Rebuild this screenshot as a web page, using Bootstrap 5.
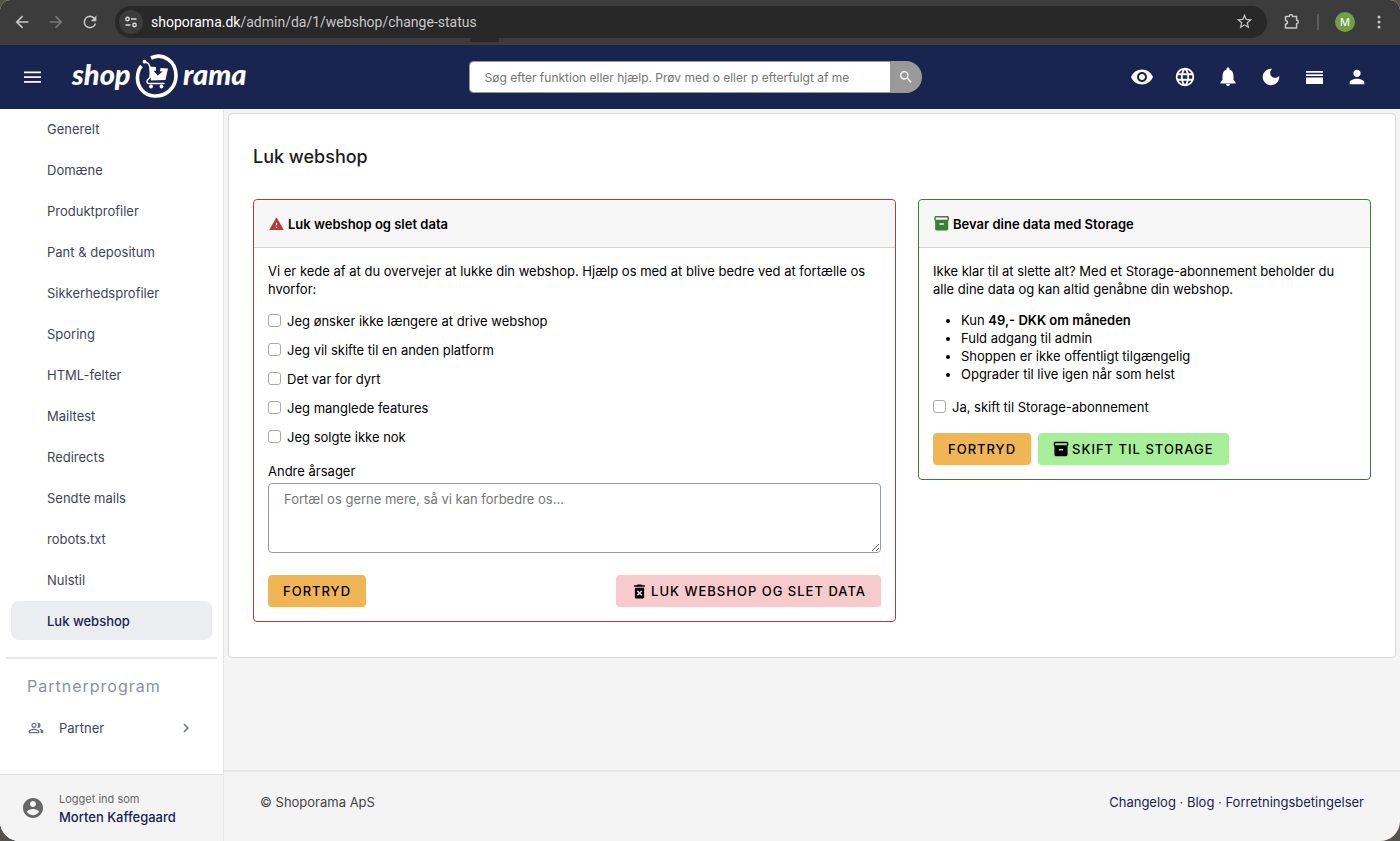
<!DOCTYPE html>
<html lang="da">
<head>
<meta charset="utf-8">
<meta name="viewport" content="width=device-width, initial-scale=1">
<title>Luk webshop</title>
<link rel="stylesheet" href="https://cdn.jsdelivr.net/npm/bootstrap@5.3.0/dist/css/bootstrap.min.css">
<style>
body{font-family:Inter,"Liberation Sans",sans-serif;font-size:13px;line-height:18px;color:#000;background:#55534a}
a{text-decoration:none}
svg{display:block;flex:none;fill:currentColor}
svg.outline{fill:none;stroke:currentColor}
.window{height:100vh;overflow:hidden;border-radius:10px 10px 20px 20px;background:#f4f4f4}
/* Browser bar */
.chrome{height:45px;background:#3c3c3c;color:#c7c7c7;padding:0 13px 2px 14px}
.chrome button,.topbar .icon-btn{background:none;border:0;padding:0;color:inherit}
.chrome .nav-btns{gap:18px;margin-right:17px}
.chrome .faded{color:#777}
.pill{position:relative;height:32px;border-radius:16px;background:#282828;padding:0 14px 0 4px}
.pill::after{content:"";position:absolute;left:355px;top:32px;width:29px;height:4px;background:#282828}
.pill .site-info{width:24px;height:24px;border-radius:12px;background:#3c3c3c;color:#ddd}
.url{font-family:Roboto,sans-serif;font-size:14px;color:#c7c7c7}
.url b{font-weight:400;color:#fff}
.chrome .avatar{width:20px;height:20px;border-radius:10px;background:#73a046;color:#fff;font-size:11px}
.vr-line{width:2px;height:16px;background:#5c5c5c}
/* Top bar */
.topbar{height:64px;background:#1a2450;color:#fff;display:grid;grid-template-columns:1fr 453px 1fr;padding:0 32px 0 22px}
.tools{gap:21px}
.logo{color:#fff}
.logo text{font-family:Lato,sans-serif;font-weight:900;font-style:italic;font-size:29px}
.search .form-control{height:32px;font-size:12px;border:1px solid #999;border-radius:4px 0 0 4px;padding:0 24px 0 15px}
.search .form-control::placeholder,.note::placeholder{color:#757575}
.search button{width:32px;height:32px;border:0;border-radius:0 16px 16px 0;background:#999;color:#fff}
/* Side menu */
.side{width:224px;background:#fff;border-right:1px solid #e6e6e6}
.side-link{display:flex;align-items:center;height:39px;margin:0 11px 2px;padding-left:36px;border-radius:8px;color:#3e4555}
.side-link.current{background:#ecedf1;color:#1a2450;font-weight:500}
.side-rule{height:2px;background:#e6e6e6;margin:17px 6px 15px}
.side-head{font-size:16px;line-height:24px;color:#8b909c;margin:0 27px 21px;font-weight:400;letter-spacing:1px}
.side-group{margin:0 24px;color:#3e4555}
.side-group svg{color:#6b7486}
.side-group span{margin-left:15px}
.side-user{height:67px;background:#f4f4f4;border-top:1px solid #e0e0e0;padding-left:22px;gap:15px;color:#666}
.logged{font-size:11px}
.user-name{color:#1a2450;font-weight:500}
/* Content */
.panel{margin:4px 4px 0;padding:24px;background:#fff;border:1px solid #d8d8d8;border-radius:4px}
.panel h1{font-size:18px;line-height:22px;font-weight:500;color:#1c1c1c;margin:8px 0 31px}
.panel .row{--bs-gutter-x:22px;margin-bottom:11px}
.box{border-radius:4px;border:1px solid #b93a35}
.box.keep{border-color:#3b7f35}
.box .card-header{height:48px;padding:0 15px;background:#f6f6f6;border-bottom:1px solid #d5d5d5}
.box .card-header svg{color:#b93a35}
.box.keep .card-header svg{color:#3b7f35}
.box .card-body{padding:14px;color:#000}
.box h2{font-size:13px;line-height:18px;font-weight:600;margin:0}
.lead-in{margin-bottom:13px}
.perks{padding-left:28px;margin-bottom:14px}
.perks strong{font-weight:600}
.opt{display:flex;align-items:center;gap:6px;min-height:19px;margin-bottom:10px}
.opt .form-check-input{float:none;margin:0;width:13px;height:13px;border:1px solid #aaa;border-radius:3px}
.note-label{margin:16px 0 3px}
.note{height:70px;font-size:13px;line-height:18px;border:1px solid #999;border-radius:4px;padding:6px 15px;resize:both}
.act-row{gap:7px;margin-top:22px}
.keep .act-row{margin-top:17px}
.act{height:32px;padding:0 15px;border:0;border-radius:4px;font-size:13px;font-weight:500;letter-spacing:1px;color:#000;text-transform:uppercase;display:inline-flex;align-items:center;gap:3px}
.act-wait{background:#f0b656}
.act-delete{background:#f7cbcb}
.act-keep{background:#a7ee98}
.foot{height:71px;border-top:2px solid #e6e6e6;padding:0 36px 10px;color:#444}
.foot a{color:#1a2450}
</style>
</head>
<body>
<div class="window d-flex flex-column">
<div class="chrome d-flex align-items-center flex-shrink-0">
 <div class="nav-btns d-flex">
 <button aria-label="Tilbage"><svg width="16" height="16" viewBox="2 2 20 20"><path d="M20 11H7.83l5.59-5.59L12 4l-8 8 8 8 1.41-1.41L7.83 13H20v-2z"/></svg></button>
 <button class="faded" aria-label="Frem"><svg width="16" height="16" viewBox="2 2 20 20"><path d="M12 4l-1.41 1.41L16.17 11H4v2h12.17l-5.58 5.59L12 20l8-8z"/></svg></button>
 <button aria-label="Genindlæs"><svg width="16" height="16" viewBox="2 2 20 20"><path d="M17.65 6.35A7.96 7.96 0 0 0 12 4a8 8 0 1 0 7.73 10h-2.08A6 6 0 1 1 12 6c1.66 0 3.14.69 4.22 1.78L13 11h7V4l-2.35 2.35z"/></svg></button>
 </div>
 <div class="pill d-flex align-items-center flex-grow-1">
 <button class="site-info d-flex align-items-center justify-content-center me-2" aria-label="Webstedsoplysninger"><svg class="outline" width="14" height="12" viewBox="0 0 14 12" stroke-width="1.4"><circle cx="3.5" cy="3" r="1.7"/><path d="M7 3h5.500M1.500 9h5"/><circle cx="10.500" cy="9" r="1.7"/></svg></button>
 <span class="url flex-grow-1"><b>shoporama.dk</b>/admin/da/1/webshop/change-status</span>
 <button aria-label="Bogmærk"><svg width="17" height="17" viewBox="1 1 22 22"><path d="M22 9.24l-7.19-.62L12 2 9.19 8.63 2 9.24l5.46 4.73L5.82 21 12 17.27 18.18 21l-1.63-7.03L22 9.24zM12 15.4l-3.76 2.27 1-4.28-3.32-2.88 4.38-.38L12 6.1l1.71 4.04 4.38.38-3.32 2.88 1 4.28L12 15.4z"/></svg></button>
 </div>
 <div class="d-flex align-items-center ps-3 gap-3">
 <button aria-label="Udvidelser"><svg class="outline" width="18" height="18" viewBox="0 0 18 18" stroke-width="1.5" stroke-linejoin="round"><path d="M2.500 3.500h3.700a1.700 1.700 0 0 1 3.400 0h4v3.800a1.700 1.700 0 0 1 0 3.400v4.300H2.500v-3.800a1.900 1.900 0 0 0 0-3.800z"/></svg></button>
 <span class="vr-line"></span>
 <button class="avatar" aria-label="Profil">M</button>
 <button aria-label="Menu"><svg width="16" height="16" viewBox="0 0 16 16"><circle cx="8" cy="3" r="1.5"/><circle cx="8" cy="8" r="1.5"/><circle cx="8" cy="13" r="1.5"/></svg></button>
 </div>
</div>
<header class="topbar align-items-center flex-shrink-0">
 <div class="d-flex align-items-center">
 <button class="icon-btn" aria-label="Menu"><svg width="20" height="20" viewBox="0 0 20 20"><path d="M2 4.500h17v1.700H2zM2 9.300h17V11H2zM2 14h17v1.700H2z"/></svg></button>
 <a href="#" class="logo ms-4" aria-label="shoporama"><svg width="184" height="50" viewBox="66 52 184 50">
 <text x="72" y="85">shop</text><text x="183" y="85">rama</text>
 <g fill="none" stroke="#fff" stroke-linecap="round"><path d="M151 58C163 52.500 176 61 176 75.500C176 88 166 96.500 154.500 96C144 95.500 137 87 137.500 77C137.800 72 139.500 68 141.500 66" stroke-width="3.600" stroke-linecap="butt"/><path d="M144.500 61.500l4 2 2 5 -.5 9-2.500 2.500q-1.500 3.500 2 3.500h14.500" stroke-width="1.500"/></g>
 <path d="M149 66.500l7 .5v4l-2.500-.2 4.200 4.700 5-4-2.700-.2.500-3.300 7.500.5-2.500 11.500-14.500.5z"/><circle cx="144.500" cy="61.700" r="1.900"/><circle cx="151" cy="86.500" r="1.900"/><circle cx="161.500" cy="86.500" r="1.900"/></svg></a>
 </div>
 <form class="search d-flex" role="search">
 <input class="form-control" type="search" aria-label="Søg" placeholder="Søg efter funktion eller hjælp. Prøv med o eller p efterfulgt af me">
 <button type="button" class="d-flex align-items-center justify-content-center" aria-label="Søg"><svg width="16" height="16" viewBox="0 0 24 24"><path d="M15.500 14h-.79l-.28-.27A6.471 6.471 0 0 0 16 9.500 6.500 6.500 0 1 0 9.500 16c1.610 0 3.090-.59 4.230-1.570l.27.28v.79l5 4.990L20.490 19l-4.990-5zm-6 0C7.010 14 5 11.990 5 9.500S7.010 5 9.500 5 14 7.010 14 9.500 11.990 14 9.500 14z"/></svg></button>
 </form>
 <div class="tools d-flex justify-content-end">
 <button class="icon-btn" aria-label="Vis"><svg width="22" height="22" viewBox="1 1 22 22"><path d="M12 4.500C7 4.500 2.730 7.610 1 12c1.730 4.390 6 7.500 11 7.500s9.270-3.110 11-7.500c-1.730-4.390-6-7.500-11-7.500zM12 17c-2.760 0-5-2.240-5-5s2.240-5 5-5 5 2.240 5 5-2.240 5-5 5zm0-8c-1.660 0-3 1.340-3 3s1.340 3 3 3 3-1.340 3-3-1.340-3-3-3z"/></svg></button>
 <button class="icon-btn" aria-label="Sprog"><svg width="22" height="22" viewBox="0 0 24 24"><path d="M11.990 2C6.470 2 2 6.480 2 12s4.470 10 9.990 10C17.520 22 22 17.520 22 12S17.520 2 11.990 2zm6.930 6h-2.950c-.32-1.250-.78-2.450-1.380-3.560 1.840.63 3.370 1.910 4.330 3.560zM12 4.040c.83 1.200 1.480 2.530 1.910 3.960h-3.820c.43-1.430 1.080-2.760 1.910-3.960zM4.260 14C4.100 13.360 4 12.690 4 12s.1-1.360.26-2h3.380c-.08.66-.14 1.320-.14 2s.06 1.340.14 2H4.260zm.82 2h2.950c.32 1.250.78 2.450 1.380 3.560-1.840-.63-3.370-1.900-4.330-3.560zm2.950-8H5.080c.96-1.660 2.490-2.930 4.330-3.560C8.810 5.550 8.350 6.750 8.030 8zM12 19.960c-.83-1.200-1.480-2.530-1.910-3.960h3.820c-.43 1.430-1.080 2.760-1.910 3.960zM14.340 14H9.660c-.09-.66-.16-1.320-.16-2s.07-1.350.16-2h4.680c.09.65.16 1.320.16 2s-.07 1.340-.16 2zm.25 5.560c.6-1.110 1.060-2.310 1.380-3.560h2.950c-.96 1.650-2.490 2.930-4.330 3.560zM16.360 14c.08-.66.14-1.320.14-2s-.06-1.340-.14-2h3.380c.16.64.26 1.310.26 2s-.1 1.360-.26 2h-3.380z"/></svg></button>
 <button class="icon-btn" aria-label="Notifikationer"><svg width="22" height="22" viewBox="1 1 22 22"><path d="M12 21c1.100 0 2-.9 2-2h-4c0 1.100.89 2 2 2zm5.500-6v-4c0-3.070-1.140-5.640-4-6.320V4c0-.83-.67-1.500-1.500-1.500s-1.500.67-1.500 1.500v.68C7.630 5.360 6.500 7.920 6.500 11v4l-2 2v1.500h15V17l-2-2z"/></svg></button>
 <button class="icon-btn" aria-label="Mørkt tema"><svg width="22" height="22" viewBox="0 0 24 24"><path d="M12 3c-4.970 0-9 4.030-9 9s4.030 9 9 9 9-4.030 9-9c0-.46-.04-.92-.1-1.360-.98 1.370-2.580 2.260-4.400 2.260-2.980 0-5.400-2.420-5.400-5.400 0-1.810.89-3.420 2.260-4.400C12.920 3.040 12.460 3 12 3z"/></svg></button>
 <button class="icon-btn" aria-label="Visning"><svg width="22" height="22" viewBox="0 0 22 22"><path d="M3 5h17v1.800H3zM3 8.300h17V10H3zM3 11.500h17V18H3z"/></svg></button>
 <button class="icon-btn" aria-label="Konto"><svg width="22" height="22" viewBox="0 0 24 24"><path d="M12 12c2.210 0 4-1.790 4-4s-1.790-4-4-4-4 1.790-4 4 1.790 4 4 4zm0 2c-2.670 0-8 1.340-8 4v2h16v-2c0-2.660-5.330-4-8-4z"/></svg></button>
 </div>
</header>
<div class="d-flex flex-grow-1 overflow-hidden">
<aside class="side d-flex flex-column flex-shrink-0">
 <nav class="flex-grow-1 overflow-hidden">
 <a class="side-link" href="#">Generelt</a>
 <a class="side-link" href="#">Domæne</a>
 <a class="side-link" href="#">Produktprofiler</a>
 <a class="side-link" href="#">Pant &amp; depositum</a>
 <a class="side-link" href="#">Sikkerhedsprofiler</a>
 <a class="side-link" href="#">Sporing</a>
 <a class="side-link" href="#">HTML-felter</a>
 <a class="side-link" href="#">Mailtest</a>
 <a class="side-link" href="#">Redirects</a>
 <a class="side-link" href="#">Sendte mails</a>
 <a class="side-link" href="#">robots.txt</a>
 <a class="side-link" href="#">Nulstil</a>
 <a class="side-link current" href="#">Luk webshop</a>
 <div class="side-rule"></div>
 <h2 class="side-head">Partnerprogram</h2>
 <a class="side-group d-flex align-items-center" href="#"><svg class="ms-1" width="16" height="16" viewBox="0 0 24 24"><path d="M16.670 13.130C18.040 14.060 19 15.320 19 17v3h4v-3c0-2.180-3.570-3.470-6.330-3.870zM15 12c2.210 0 4-1.790 4-4s-1.790-4-4-4c-.47 0-.91.1-1.330.24a5.980 5.980 0 0 1 0 7.520c.42.140.86.240 1.330.24zM9 12c2.210 0 4-1.790 4-4s-1.790-4-4-4-4 1.790-4 4 1.790 4 4 4zm0-6c1.100 0 2 .9 2 2s-.9 2-2 2-2-.9-2-2 .9-2 2-2zm0 7c-2.670 0-8 1.340-8 4v3h16v-3c0-2.660-5.330-4-8-4zm6 5H3v-.99C3.200 16.290 6.300 15 9 15s5.800 1.290 6 2v1z"/></svg><span class="flex-grow-1">Partner</span><svg class="me-1" width="18" height="18" viewBox="0 0 24 24"><path d="M10 6L8.590 7.410 13.170 12l-4.580 4.590L10 18l6-6z"/></svg></a>
 </nav>
 <div class="side-user d-flex align-items-center flex-shrink-0"><svg width="22" height="22" viewBox="1 1 22 22"><path d="M12 2C6.480 2 2 6.480 2 12s4.480 10 10 10 10-4.480 10-10S17.520 2 12 2zm0 3c1.660 0 3 1.340 3 3s-1.340 3-3 3-3-1.340-3-3 1.340-3 3-3zm0 14.200c-2.500 0-4.710-1.280-6-3.220.03-1.990 4-3.080 6-3.080 1.990 0 5.970 1.090 6 3.080-1.290 1.940-3.500 3.220-6 3.220z"/></svg>
 <div><div class="logged">Logget ind som</div><a class="user-name" href="#">Morten Kaffegaard</a></div></div>
</aside>
<div class="d-flex flex-column flex-grow-1">
<main class="panel">
 <h1>Luk webshop</h1>
 <div class="row align-items-start">
 <div class="col-7"><section class="card box">
 <div class="card-header d-flex align-items-center"><svg class="me-1" width="15" height="16" viewBox="1 0 22 24"><path d="M1 21h22L12 2 1 21zm12-3h-2v-2h2v2zm0-4h-2v-4h2v4z"/></svg><h2>Luk webshop og slet data</h2></div>
 <form class="card-body">
 <p class="lead-in">Vi er kede af at du overvejer at lukke din webshop. Hjælp os med at blive bedre ved at fortælle os hvorfor:</p>
 <label class="opt"><input class="form-check-input" type="checkbox">Jeg ønsker ikke længere at drive webshop</label>
 <label class="opt"><input class="form-check-input" type="checkbox">Jeg vil skifte til en anden platform</label>
 <label class="opt"><input class="form-check-input" type="checkbox">Det var for dyrt</label>
 <label class="opt"><input class="form-check-input" type="checkbox">Jeg manglede features</label>
 <label class="opt"><input class="form-check-input" type="checkbox">Jeg solgte ikke nok</label>
 <label class="note-label d-block" for="note">Andre årsager</label>
 <textarea class="form-control note" id="note" placeholder="Fortæl os gerne mere, så vi kan forbedre os..."></textarea>
 <div class="act-row d-flex justify-content-between"><button type="button" class="act act-wait">Fortryd</button><button type="button" class="act act-delete"><svg width="17" height="17" viewBox="1 1 22 22"><path d="M6 19c0 1.100.9 2 2 2h8c1.100 0 2-.9 2-2V7H6v12zm2.460-7.120l1.410-1.410L12 12.590l2.120-2.120 1.410 1.410L13.410 14l2.120 2.120-1.410 1.410L12 15.410l-2.120 2.120-1.410-1.410L10.590 14l-2.130-2.120zM15.500 4l-1-1h-5l-1 1H5v2h14V4z"/></svg>Luk webshop og slet data</button></div>
 </form></section></div>
 <div class="col-5"><section class="card box keep">
 <div class="card-header d-flex align-items-center"><svg class="me-1" width="15" height="16" viewBox="1.500 2 20.500 22"><path d="M20 2H4c-1 0-2 .9-2 2v3.010c0 .72.43 1.340 1 1.690V20c0 1.100 1.100 2 2 2h14c.9 0 2-.9 2-2V8.700c.57-.35 1-.97 1-1.690V4c0-1.100-1-2-2-2zm-5 12H9v-2h6v2zm5-7H4V4h16v3z"/></svg><h2>Bevar dine data med Storage</h2></div>
 <form class="card-body">
 <p class="lead-in">Ikke klar til at slette alt? Med et Storage-abonnement beholder du alle dine data og kan altid genåbne din webshop.</p>
 <ul class="perks"><li>Kun <strong>49,- DKK om måneden</strong></li><li>Fuld adgang til admin</li><li>Shoppen er ikke offentligt tilgængelig</li><li>Opgrader til live igen når som helst</li></ul>
 <label class="opt"><input class="form-check-input" type="checkbox">Ja, skift til Storage-abonnement</label>
 <div class="act-row d-flex"><button type="button" class="act act-wait">Fortryd</button><button type="button" class="act act-keep"><svg width="16" height="16" viewBox="1 1 22 22"><path d="M20 2H4c-1 0-2 .9-2 2v3.010c0 .72.43 1.340 1 1.690V20c0 1.100 1.100 2 2 2h14c.9 0 2-.9 2-2V8.700c.57-.35 1-.97 1-1.690V4c0-1.100-1-2-2-2zm-5 12H9v-2h6v2zm5-7H4V4h16v3z"/></svg>Skift til Storage</button></div>
 </form></section></div>
 </div>
</main>
<footer class="foot mt-auto d-flex align-items-center justify-content-between"><span>© Shoporama ApS</span><span><a href="#">Changelog</a> · <a href="#">Blog</a> · <a href="#">Forretningsbetingelser</a></span></footer>
</div>
</div>
</div>
<script src="https://cdn.jsdelivr.net/npm/bootstrap@5.3.0/dist/js/bootstrap.bundle.min.js"></script>
</body>
</html>
